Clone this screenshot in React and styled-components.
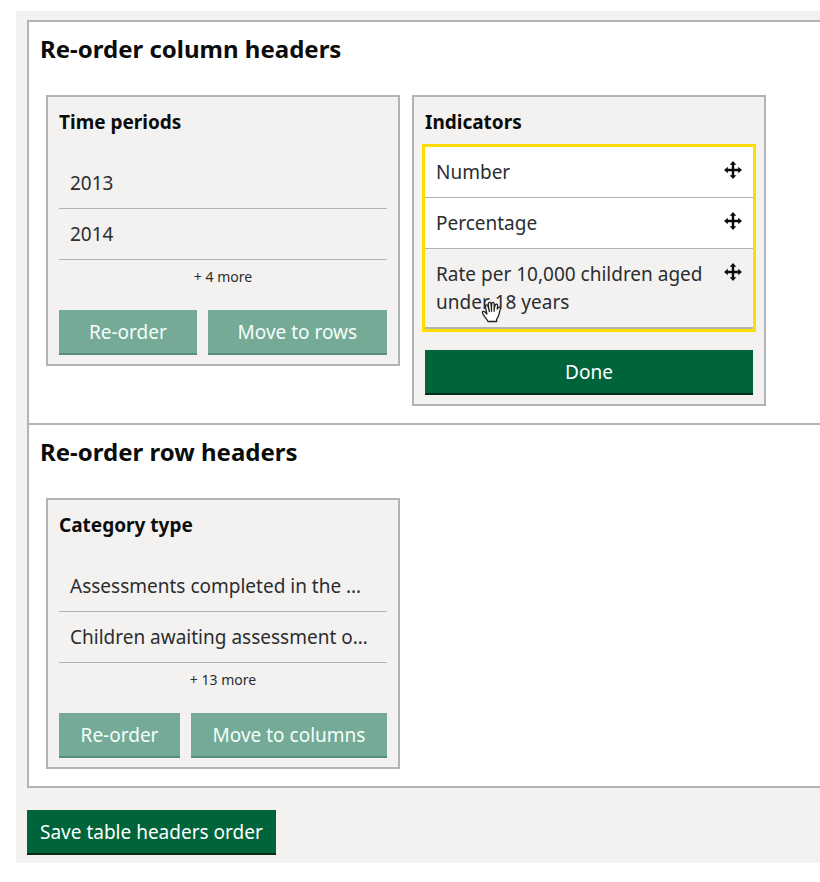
import React from "react";
import styled, { createGlobalStyle, css } from "styled-components";

const GlobalStyle = createGlobalStyle`
  *, *::before, *::after {
    box-sizing: border-box;
  }
  body {
    margin: 0;
    background-color: #fff;
    color: #0b0c0c;
    font-family: "Noto Sans", "Open Sans", sans-serif;
    overflow-x: hidden;
  }
`;

const Page = styled.form`
  margin: 11px 0 0 16px;
  padding: 9px 0 8px 11px;
  background-color: #f3f2f1;
`;

const Panel = styled.div`
  margin-bottom: 22px;
  border: 2px solid #b1b4b6;
  border-right: 0;
  background-color: #fff;
`;

const Section = styled.section`
  padding: 11px 11px 17px;

  & + & {
    border-top: 2px solid #b1b4b6;
  }
`;

const Heading = styled.h2`
  margin: 0 0 30px;
  font-size: 24px;
  font-weight: 700;
  line-height: 32px;
`;

const Cards = styled.div`
  display: flex;
  flex-wrap: wrap;
  align-items: flex-start;
  gap: 12px;
  padding-left: 6px;
`;

const Card = styled.div`
  flex: 0 1 354px;
  min-width: 0;
  padding: 11px 11px 9px;
  border: 2px solid #b1b4b6;
  background-color: #f3f2f1;
`;

const CardTitle = styled.h3`
  margin: 0;
  font-size: 19px;
  font-weight: 700;
  line-height: 28px;
`;

const List = styled.ul`
  margin: 22px 0 0;
  padding: 0;
  list-style: none;

  ${({ $active }) =>
    $active &&
    css`
      margin: 11px 0 21px;
      border-bottom: 1px solid #b1b4b6;
      outline: 3px solid #ffdd00;
    `}
`;

const Item = styled.li`
  position: relative;
  display: flex;
  align-items: flex-start;
  justify-content: space-between;
  gap: 12px;
  padding: 11px;
  border-bottom: 1px solid #b1b4b6;
  background-color: ${({ $white }) => ($white ? "#fff" : "transparent")};
  color: #2b2d2f;
  font-size: 19px;
  line-height: 28px;
`;

const Label = styled.span`
  min-width: 0;
`;

const More = styled.p`
  margin: 6px 0 22px;
  color: #2b2d2f;
  font-size: 14px;
  line-height: 22px;
  text-align: center;
`;

const Buttons = styled.div`
  display: flex;
  gap: 11px;
`;

const Button = styled.button`
  flex: ${({ $grow }) => ($grow ? "1 1 auto" : "0 0 auto")};
  padding: 8px 13px 7px;
  border: 0;
  border-bottom: 2px solid #002d18;
  border-radius: 0;
  background-color: #00643b;
  color: #fff;
  font-family: inherit;
  font-size: 19px;
  line-height: 28px;
  white-space: nowrap;
  cursor: pointer;

  &:disabled {
    border-bottom-color: #568f79;
    background-color: #75aa97;
    color: #f3fffa;
    cursor: default;
  }
`;

const MoveIcon = styled.svg`
  flex: none;
  width: 18px;
  height: 18px;
  margin-top: 3px;
`;

const Hand = styled.svg`
  position: absolute;
  top: 49px;
  left: 56px;
  width: 22px;
  height: 26px;
`;

const Arrows = () => (
  <MoveIcon viewBox="0 0 18 18" aria-hidden="true">
    <path d="M9 2v14M2 9h14" stroke="#0b0c0c" strokeWidth="2.4" />
    <path
      d="M9 0l3.300 3.800H5.700zM9 18l3.300-3.800H5.700zM0 9l3.800-3.300v6.600zM18 9l-3.800-3.300v6.600z"
      fill="#0b0c0c"
    />
  </MoveIcon>
);

const GrabCursor = () => (
  <Hand viewBox="0 0 22 26" aria-hidden="true">
    <path
      d="M7 23.500c-.8-2-2.400-3.500-3.500-5.200-.7-1.200-2.300-2.900-2.100-3.900.3-1.300 2-1.200 3 .1l1.500 1.500L4.500 8.800c-.4-2 1.700-2.600 2.400-.7l.8 2.400-.4-4.500c-.1-2 2.300-2.200 2.600-.2l.6 4.200.2-4.300c.1-1.900 2.500-1.800 2.500.1l.1 4.500.9-3.200c.5-1.600 2.500-1.300 2.400.4l-.4 3.600 1-1.400c.9-1.200 2.500-.5 2.100 1.100l-1.500 6.400c-.4 1.900-1.800 3-2.200 4.300v2z"
      fill="#fff"
      stroke="#222"
      strokeWidth="1.300"
      strokeLinejoin="round"
    />
    <path
      d="M7.700 10.500l.7 3M10.500 10v3.300M13.300 10.300l-.2 3"
      stroke="#222"
      strokeWidth="1.300"
      strokeLinecap="round"
    />
  </Hand>
);

const indicators = [
  { id: 1, name: "Number" },
  { id: 2, name: "Percentage" },
  { id: 3, name: "Rate per 10,000 children aged under 18 years", held: true },
];

const HeaderGroup = ({ title, items, more, moveTo }) => (
  <Card>
    <CardTitle>{title}</CardTitle>
    <List>
      {items.map((item) => (
        <Item key={item}>
          <Label>{item}</Label>
        </Item>
      ))}
    </List>
    <More>+ {more} more</More>
    <Buttons>
      <Button type="button" $grow disabled>
        Re-order
      </Button>
      <Button type="button" $grow disabled>
        Move to {moveTo}
      </Button>
    </Buttons>
  </Card>
);

const App = () => {
  return (
    <>
      <GlobalStyle />
      <Page onSubmit={(e) => e.preventDefault()}>
        <Panel>
          <Section>
            <Heading>Re-order column headers</Heading>
            <Cards>
              <HeaderGroup
                title="Time periods"
                items={["2013", "2014"]}
                more={4}
                moveTo="rows"
              />
              <Card>
                <CardTitle>Indicators</CardTitle>
                <List $active>
                  {indicators.map((item) => (
                    <Item key={item.id} $white={!item.held}>
                      <Label>{item.name}</Label>
                      <Arrows />
                      {item.held && <GrabCursor />}
                    </Item>
                  ))}
                </List>
                <Buttons>
                  <Button type="button" $grow>
                    Done
                  </Button>
                </Buttons>
              </Card>
            </Cards>
          </Section>
          <Section>
            <Heading>Re-order row headers</Heading>
            <Cards>
              <HeaderGroup
                title="Category type"
                items={[
                  "Assessments completed in the …",
                  "Children awaiting assessment o…",
                ]}
                more={13}
                moveTo="columns"
              />
            </Cards>
          </Section>
        </Panel>
        <Button type="submit">Save table headers order</Button>
      </Page>
    </>
  );
};

export default App;
